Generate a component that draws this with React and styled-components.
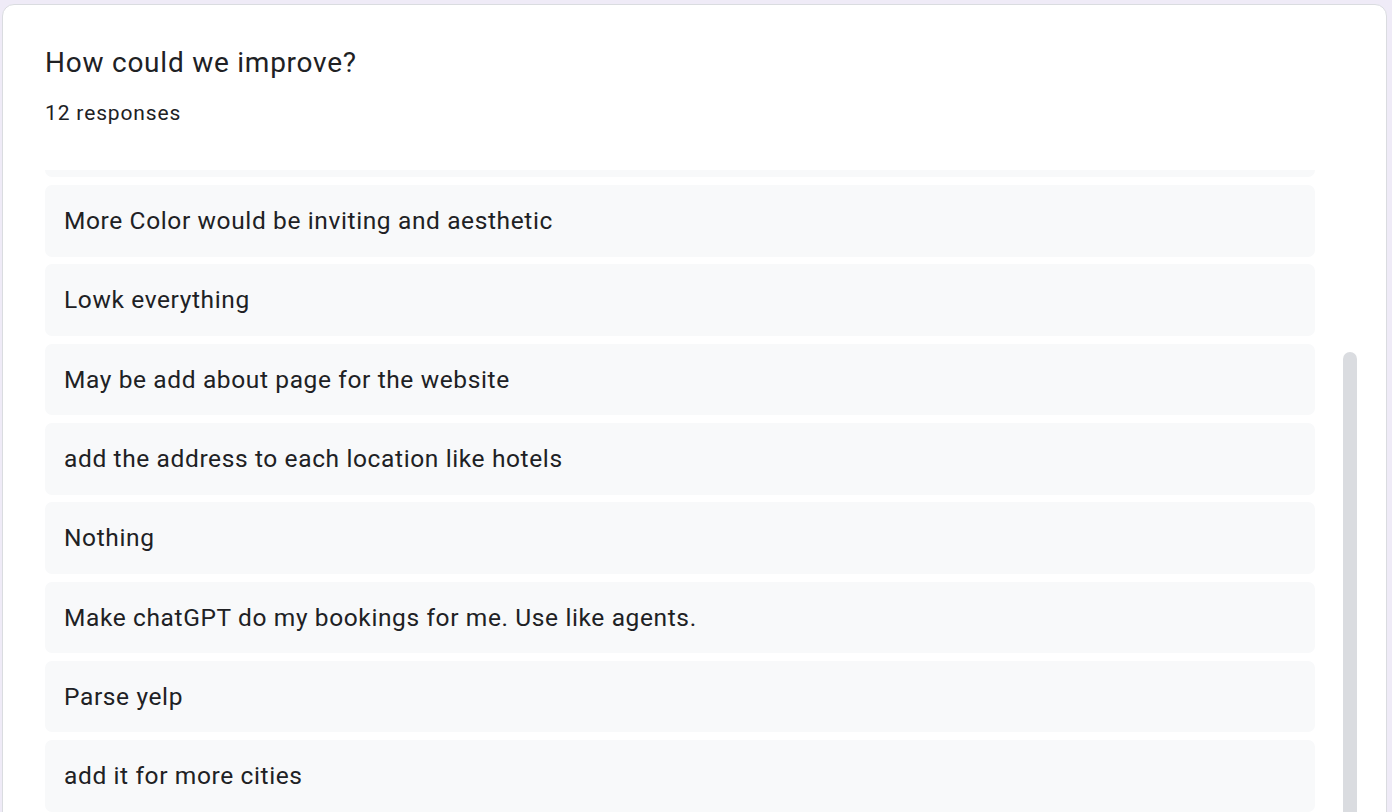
import React, { useLayoutEffect, useRef } from 'react';
import styled, { createGlobalStyle } from 'styled-components';

const GlobalStyle = createGlobalStyle`
   html, body {
      margin: 0;
      padding: 0;
      height: 100%;
      overflow: hidden;
      background: #efebf7;
   }
   body {
      font-family: Roboto, "Liberation Sans", Arial, sans-serif;
      color: #202124;
   }
`;

const Page = styled.main`
   padding: 4px 5px 0 2px;
`;

const Card = styled.section`
   background: #ffffff;
   border: 1px solid #dadce0;
   border-radius: 12px;
   padding: 37px 42px 42px 42px;
`;

const Title = styled.h2`
   margin: 0;
   font-size: 28px;
   font-weight: 400;
   line-height: 42px;
   letter-spacing: 0.76px;
`;

const Count = styled.p`
   margin: 15px 0 0 0;
   font-size: 21px;
   line-height: 28px;
   letter-spacing: 0.85px;
`;

const ListArea = styled.div`
   display: flex;
   margin: 43px -13px 0 0;
   height: 800px;
`;

const List = styled.div`
   flex: 1;
   min-width: 0;
   padding-bottom: 376px;
   box-sizing: border-box;
   overflow: hidden;
`;

const ScrollTrack = styled.div`
   flex-shrink: 0;
   width: 14px;
   margin-left: 28px;
`;

const ScrollThumb = styled.div`
   margin-top: 182px;
   height: 482px;
   border-radius: 7px;
   background: #dadce0;
`;

const Item = styled.div`
   background: #f8f9fa;
   border-radius: 7px;
   padding: 18px 19px;
   margin-bottom: 7.8px;
   font-size: 24.5px;
   line-height: 35.5px;
   letter-spacing: 0.62px;
`;

const responses = [
   'Faster loading on mobile',
   'More filters for searching places',
   'Show prices in local currency',
   'Better map view',
   'More Color would be inviting and aesthetic',
   'Lowk everything',
   'May be add about page for the website',
   'add the address to each location like hotels',
   'Nothing',
   'Make chatGPT do my bookings for me. Use like agents.',
   'Parse yelp',
   'add it for more cities',
];

const App = () => {
   const listRef = useRef(null);

   useLayoutEffect(() => {
      if (listRef.current) listRef.current.scrollTop = 302;
   }, []);

   return (
      <Page>
         <GlobalStyle />
         <Card>
            <Title>How could we improve?</Title>
            <Count>{responses.length} responses</Count>
            <ListArea>
               <List ref={listRef}>
                  {responses.map((text, i) => (
                     <Item key={i}>{text}</Item>
                  ))}
               </List>
               <ScrollTrack>
                  <ScrollThumb />
               </ScrollTrack>
            </ListArea>
         </Card>
      </Page>
   );
};

export default App;
